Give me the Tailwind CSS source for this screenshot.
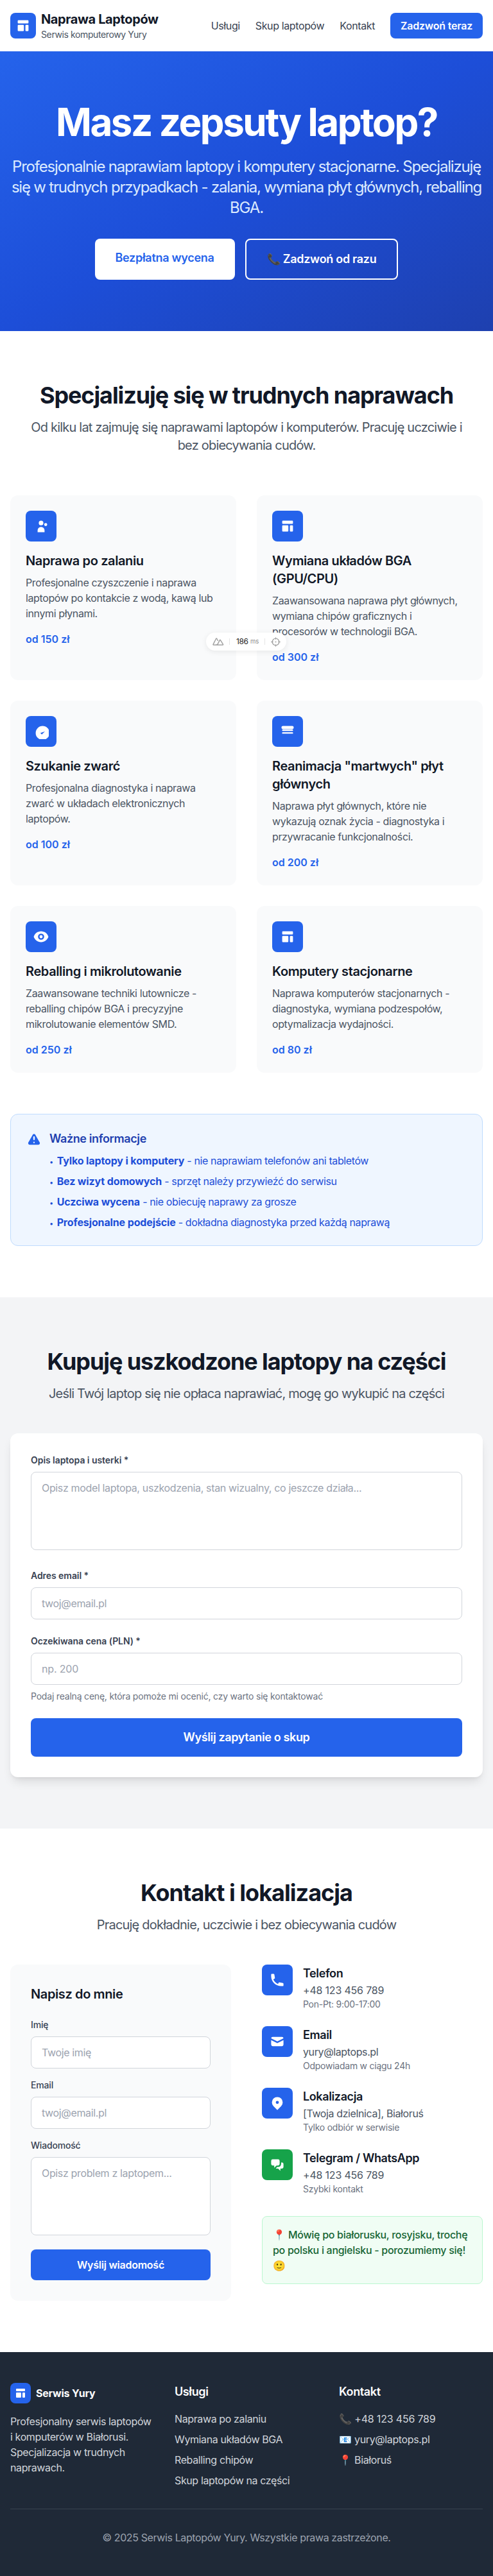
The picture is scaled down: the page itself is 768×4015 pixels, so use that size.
<!DOCTYPE html>
<html lang="pl">
<head>
<meta charset="utf-8">
<meta name="viewport" content="width=device-width, initial-scale=1">
<title>Naprawa Laptopów</title>
<script src="https://cdn.jsdelivr.net/npm/@tailwindcss/browser@4"></script>
</head>
<body class="relative bg-white font-['Inter',sans-serif] text-base tracking-[-0.024em] text-[#111827] antialiased">

<svg class="hidden" aria-hidden="true">
  <symbol id="layout" viewBox="0 0 20 20"><path d="M3 4a1 1 0 011-1h12a1 1 0 011 1v2a1 1 0 01-1 1H4a1 1 0 01-1-1V4zM3 10a1 1 0 011-1h6a1 1 0 011 1v6a1 1 0 01-1 1H4a1 1 0 01-1-1v-6zM14 9a1 1 0 00-1 1v6a1 1 0 001 1h2a1 1 0 001-1v-6a1 1 0 00-1-1h-2z"/></symbol>
</svg>

<header class="h-20 bg-white px-4 flex items-center justify-between">
  <div class="flex items-center gap-2">
    <div class="size-10 rounded-lg bg-[#2563eb] flex items-center justify-center text-white"><svg class="size-6" fill="currentColor"><use href="#layout"/></svg></div>
    <div>
      <h1 class="text-xl leading-7 font-bold">Naprawa Laptopów</h1>
      <p class="text-sm leading-5 text-[#4b5563]">Serwis komputerowy Yury</p>
    </div>
  </div>
  <nav class="flex items-center gap-6 whitespace-nowrap text-[#374151]">
    <a>Usługi</a>
    <a>Skup laptopów</a>
    <a>Kontakt</a>
    <a class="rounded-lg bg-[#2563eb] px-4 py-2 font-semibold tracking-[-0.0135em] text-white">Zadzwoń teraz</a>
  </nav>
</header>

<section class="bg-[linear-gradient(to_bottom_right,#2563eb,#1d4ed8,#1e40af)] py-20 px-4 text-center text-white">
  <h2 class="mb-6 text-6xl leading-[60px] font-bold tracking-[-0.0406em]">Masz zepsuty laptop?</h2>
  <p class="mb-8 text-2xl leading-8 tracking-[-0.0496em] text-[#dbeafe] whitespace-nowrap">Profesjonalnie naprawiam laptopy i komputery stacjonarne. Specjalizuję<br>się w trudnych przypadkach - zalania, wymiana płyt głównych, reballing<br>BGA.</p>
  <div class="flex justify-center gap-4 text-lg leading-7 font-semibold tracking-[-0.0164em]">
    <a class="rounded-lg bg-white px-8 py-4 text-[#2563eb]">Bezpłatna wycena</a>
    <a class="rounded-lg border-2 border-white px-8 py-4 text-white"><span class="inline-block w-[21px] tracking-normal text-[17px] leading-none">📞</span> Zadzwoń od razu</a>
  </div>
</section>

<section class="py-20 px-4">
  <div class="mb-16 text-center whitespace-nowrap">
    <h2 class="mb-4 text-4xl leading-10 font-bold tracking-[-0.0306em]">Specjalizuję się w trudnych naprawach</h2>
    <p class="text-xl leading-7 tracking-[-0.0397em] text-[#4b5563]">Od kilku lat zajmuję się naprawami laptopów i komputerów. Pracuję uczciwie i<br>bez obiecywania cudów.</p>
  </div>
  <div class="grid grid-cols-2 gap-8">
    <article class="rounded-xl bg-[#f9fafb] p-6">
      <div class="mb-4 size-12 rounded-lg bg-[#2563eb] flex items-center justify-center text-white"><svg class="size-6" viewBox="0 0 20 20" fill="currentColor"><path d="M13 6a3 3 0 11-6 0 3 3 0 016 0zM18 8a2 2 0 11-4 0 2 2 0 014 0zM14.5 15.5a4.5 4.5 0 00-9 0V18h9v-2.500z"/></svg></div>
      <h3 class="mb-2 text-xl leading-7 font-semibold">Naprawa po zalaniu</h3>
      <p class="mb-4 text-[#4b5563]">Profesjonalne czyszczenie i naprawa<br>laptopów po kontakcie z wodą, kawą lub<br>innymi płynami.</p>
      <div class="font-semibold tracking-normal text-[#2563eb]">od 150 zł</div>
    </article>
    <article class="rounded-xl bg-[#f9fafb] p-6">
      <div class="mb-4 size-12 rounded-lg bg-[#2563eb] flex items-center justify-center text-white"><svg class="size-6" fill="currentColor"><use href="#layout"/></svg></div>
      <h3 class="mb-2 text-xl leading-7 font-semibold">Wymiana układów BGA<br>(GPU/CPU)</h3>
      <p class="mb-4 text-[#4b5563]">Zaawansowana naprawa płyt głównych,<br>wymiana chipów graficznych i<br>procesorów w technologii BGA.</p>
      <div class="font-semibold tracking-normal text-[#2563eb]">od 300 zł</div>
    </article>
    <article class="rounded-xl bg-[#f9fafb] p-6">
      <div class="mb-4 size-12 rounded-lg bg-[#2563eb] flex items-center justify-center text-white"><svg class="size-6" viewBox="0 0 20 20" fill="currentColor" fill-rule="evenodd"><path d="M9 12l2 2 4-4zm12 0a9 9 0 11-18 0 9 9 0 0118 0z"/></svg></div>
      <h3 class="mb-2 text-xl leading-7 font-semibold">Szukanie zwarć</h3>
      <p class="mb-4 text-[#4b5563]">Profesjonalna diagnostyka i naprawa<br>zwarć w układach elektronicznych<br>laptopów.</p>
      <div class="font-semibold tracking-normal text-[#2563eb]">od 100 zł</div>
    </article>
    <article class="rounded-xl bg-[#f9fafb] p-6">
      <div class="mb-4 size-12 rounded-lg bg-[#2563eb] flex items-center justify-center text-white"><svg class="size-6" viewBox="0 0 20 20" fill="currentColor"><path d="M4 3a2 2 0 100 4h12a2 2 0 100-4H4z"/><rect x="2.900" y="7.400" width="14.200" height="1.900" rx=".8"/><rect x="2.900" y="11" width="14.200" height="2" rx=".8"/></svg></div>
      <h3 class="mb-2 text-xl leading-7 font-semibold">Reanimacja "martwych" płyt<br>głównych</h3>
      <p class="mb-4 text-[#4b5563]">Naprawa płyt głównych, które nie<br>wykazują oznak życia - diagnostyka i<br>przywracanie funkcjonalności.</p>
      <div class="font-semibold tracking-normal text-[#2563eb]">od 200 zł</div>
    </article>
    <article class="rounded-xl bg-[#f9fafb] p-6">
      <div class="mb-4 size-12 rounded-lg bg-[#2563eb] flex items-center justify-center text-white"><svg class="size-6" viewBox="0 0 20 20" fill="currentColor" fill-rule="evenodd"><path d="M10 12a2 2 0 100-4 2 2 0 000 4z"/><path d="M.458 10C1.732 5.943 5.522 3 10 3s8.268 2.943 9.542 7c-1.274 4.057-5.064 7-9.542 7S1.732 14.057.458 10zM14 10a4 4 0 11-8 0 4 4 0 018 0z"/></svg></div>
      <h3 class="mb-2 text-xl leading-7 font-semibold">Reballing i mikrolutowanie</h3>
      <p class="mb-4 text-[#4b5563]">Zaawansowane techniki lutownicze -<br>reballing chipów BGA i precyzyjne<br>mikrolutowanie elementów SMD.</p>
      <div class="font-semibold tracking-normal text-[#2563eb]">od 250 zł</div>
    </article>
    <article class="rounded-xl bg-[#f9fafb] p-6">
      <div class="mb-4 size-12 rounded-lg bg-[#2563eb] flex items-center justify-center text-white"><svg class="size-6" fill="currentColor"><use href="#layout"/></svg></div>
      <h3 class="mb-2 text-xl leading-7 font-semibold">Komputery stacjonarne</h3>
      <p class="mb-4 text-[#4b5563]">Naprawa komputerów stacjonarnych -<br>diagnostyka, wymiana podzespołów,<br>optymalizacja wydajności.</p>
      <div class="font-semibold tracking-normal text-[#2563eb]">od 80 zł</div>
    </article>
  </div>

  <div class="mt-16 flex items-start gap-3 rounded-xl border border-[#bfdbfe] bg-[#eff6ff] p-6">
    <svg class="mt-1 size-6 shrink-0 text-[#2563eb]" viewBox="0 0 20 20" fill="currentColor" fill-rule="evenodd"><path d="M8.257 3.099c.765-1.360 2.722-1.360 3.486 0l5.580 9.920c.750 1.334-.213 2.980-1.742 2.980H4.420c-1.530 0-2.493-1.646-1.743-2.980l5.580-9.920zM11 13a1 1 0 11-2 0 1 1 0 012 0zm-1-8a1 1 0 00-1 1v3a1 1 0 002 0V6a1 1 0 00-1-1z"/></svg>
    <div>
      <h4 class="mb-2 text-lg leading-7 font-semibold text-[#1e40af]">Ważne informacje</h4>
      <ul class="space-y-2 text-[#1d4ed8]">
        <li class="h-6"><span class="inline-block w-[7.500px] text-[11px] leading-none">•</span> <strong class="font-bold tracking-[-0.008em]">Tylko laptopy i komputery</strong> - nie naprawiam telefonów ani tabletów</li>
        <li class="h-6"><span class="inline-block w-[7.500px] text-[11px] leading-none">•</span> <strong class="font-bold tracking-[-0.008em]">Bez wizyt domowych</strong> - sprzęt należy przywieźć do serwisu</li>
        <li class="h-6"><span class="inline-block w-[7.500px] text-[11px] leading-none">•</span> <strong class="font-bold tracking-[-0.008em]">Uczciwa wycena</strong> - nie obiecuję naprawy za grosze</li>
        <li class="h-6"><span class="inline-block w-[7.500px] text-[11px] leading-none">•</span> <strong class="font-bold tracking-[-0.008em]">Profesjonalne podejście</strong> - dokładna diagnostyka przed każdą naprawą</li>
      </ul>
    </div>
  </div>
</section>

<section class="bg-[#f3f4f6] py-20 px-4">
  <div class="mb-12 text-center">
    <h2 class="mb-4 text-4xl leading-10 font-bold tracking-[-0.0306em]">Kupuję uszkodzone laptopy na części</h2>
    <p class="text-xl leading-7 tracking-[-0.0397em] text-[#4b5563]">Jeśli Twój laptop się nie opłaca naprawiać, mogę go wykupić na części</p>
  </div>
  <form class="rounded-xl bg-white p-8 shadow-lg">
    <label class="mb-2 block text-sm leading-5 font-semibold tracking-[-0.004em] text-[#374151]">Opis laptopa i usterki *</label>
    <textarea rows="4" class="block h-[122px] w-full resize-none rounded-lg border border-[#d1d5db] bg-white px-4 py-3 leading-6 tracking-[-0.022em] placeholder:text-[#9ca3af]" placeholder="Opisz model laptopa, uszkodzenia, stan wizualny, co jeszcze działa..."></textarea>
    <label class="mt-[30px] mb-2 block text-sm leading-5 font-semibold tracking-[-0.004em] text-[#374151]">Adres email *</label>
    <input type="email" class="block h-[50px] w-full rounded-lg border border-[#d1d5db] bg-white px-4 py-3 tracking-[-0.022em] placeholder:text-[#9ca3af]" placeholder="twoj@email.pl">
    <label class="mt-6 mb-2 block text-sm leading-5 font-semibold tracking-[-0.004em] text-[#374151]">Oczekiwana cena (PLN) *</label>
    <input type="text" class="block h-[50px] w-full rounded-lg border border-[#d1d5db] bg-white px-4 py-3 tracking-[-0.01em] placeholder:text-[#9ca3af]" placeholder="np. 200">
    <p class="mt-2 mb-6 text-sm leading-5 tracking-[-0.0143em] text-[#6b7280]">Podaj realną cenę, która pomoże mi ocenić, czy warto się kontaktować</p>
    <button type="button" class="block h-15 w-full rounded-lg bg-[#2563eb] text-lg leading-7 font-semibold tracking-[-0.0203em] text-white">Wyślij zapytanie o skup</button>
  </form>
</section>

<section class="py-20 px-4">
  <div class="mb-12 text-center">
    <h2 class="mb-4 text-4xl leading-10 font-bold tracking-[-0.0272em]">Kontakt i lokalizacja</h2>
    <p class="text-xl leading-7 tracking-[-0.0397em] text-[#4b5563]">Pracuję dokładnie, uczciwie i bez obiecywania cudów</p>
  </div>
  <div class="grid grid-cols-2 gap-12">
    <form class="rounded-xl bg-[#f9fafb] p-8">
      <h3 class="mb-6 text-xl leading-7 font-semibold">Napisz do mnie</h3>
      <label class="mb-2 block text-sm leading-5 font-medium tracking-[-0.013em] text-[#374151]">Imię</label>
      <input type="text" class="mb-4 block h-[50px] w-full rounded-lg border border-[#d1d5db] bg-white px-4 py-3 tracking-[-0.022em] placeholder:text-[#9ca3af]" placeholder="Twoje imię">
      <label class="mb-2 block text-sm leading-5 font-medium tracking-[-0.013em] text-[#374151]">Email</label>
      <input type="email" class="mb-4 block h-[50px] w-full rounded-lg border border-[#d1d5db] bg-white px-4 py-3 tracking-[-0.022em] placeholder:text-[#9ca3af]" placeholder="twoj@email.pl">
      <label class="mb-2 block text-sm leading-5 font-medium tracking-[-0.013em] text-[#374151]">Wiadomość</label>
      <textarea rows="4" class="mb-[22px] block h-[122px] w-full resize-none rounded-lg border border-[#d1d5db] bg-white px-4 py-3 leading-6 tracking-[-0.022em] placeholder:text-[#9ca3af]" placeholder="Opisz problem z laptopem..."></textarea>
      <button type="button" class="block h-12 w-full rounded-lg bg-[#2563eb] font-semibold tracking-[-0.0153em] text-white">Wyślij wiadomość</button>
    </form>
    <div>
      <div class="space-y-6">
        <div class="flex items-start gap-4">
          <div class="size-12 rounded-lg bg-[#2563eb] flex items-center justify-center text-white"><svg class="size-6" viewBox="0 0 20 20" fill="currentColor"><path d="M2 3a1 1 0 011-1h2.153a1 1 0 01.986.836l.740 4.435a1 1 0 01-.540 1.060l-1.548.773a11.037 11.037 0 006.105 6.105l.774-1.548a1 1 0 011.059-.540l4.435.740a1 1 0 01.836.986V17a1 1 0 01-1 1h-2C7.820 18 2 12.180 2 5V3z"/></svg></div>
          <div>
            <h4 class="text-lg leading-7 font-semibold">Telefon</h4>
            <p class="tracking-[-0.012em] text-[#4b5563]">+48 123 456 789</p>
            <p class="text-sm leading-5 tracking-[-0.0177em] text-[#6b7280]">Pon-Pt: 9:00-17:00</p>
          </div>
        </div>
        <div class="flex items-start gap-4">
          <div class="size-12 rounded-lg bg-[#2563eb] flex items-center justify-center text-white"><svg class="size-6" viewBox="0 0 20 20" fill="currentColor"><path d="M2.003 5.884L10 9.882l7.997-3.998A2 2 0 0016 4H4a2 2 0 00-1.997 1.884z"/><path d="M18 8.118l-8 4-8-4V14a2 2 0 002 2h12a2 2 0 002-2V8.118z"/></svg></div>
          <div>
            <h4 class="text-lg leading-7 font-semibold">Email</h4>
            <p class="text-[#4b5563]">yury@laptops.pl</p>
            <p class="text-sm leading-5 tracking-[-0.0177em] text-[#6b7280]">Odpowiadam w ciągu 24h</p>
          </div>
        </div>
        <div class="flex items-start gap-4">
          <div class="size-12 rounded-lg bg-[#2563eb] flex items-center justify-center text-white"><svg class="size-6" viewBox="0 0 20 20" fill="currentColor" fill-rule="evenodd"><path d="M5.050 4.050a7 7 0 119.900 9.900L10 18.900l-4.950-4.950a7 7 0 010-9.900zM10 11a2 2 0 100-4 2 2 0 000 4z"/></svg></div>
          <div>
            <h4 class="text-lg leading-7 font-semibold">Lokalizacja</h4>
            <p class="text-[#4b5563]">[Twoja dzielnica], Białoruś</p>
            <p class="text-sm leading-5 tracking-[-0.0177em] text-[#6b7280]">Tylko odbiór w serwisie</p>
          </div>
        </div>
        <div class="flex items-start gap-4">
          <div class="size-12 rounded-lg bg-[#16a34a] flex items-center justify-center text-white"><svg class="size-6" viewBox="0 0 20 20" fill="currentColor"><path d="M2 5a2 2 0 012-2h7a2 2 0 012 2v4a2 2 0 01-2 2H9l-3 3v-3H4a2 2 0 01-2-2V5z"/><path d="M15 7v2a4 4 0 01-4 4H9.828l-1.766 1.767c.280.149.599.233.938.233h2l3 3v-3h2a2 2 0 002-2V9a2 2 0 00-2-2h-1z"/></svg></div>
          <div>
            <h4 class="text-lg leading-7 font-semibold">Telegram / WhatsApp</h4>
            <p class="tracking-[-0.012em] text-[#4b5563]">+48 123 456 789</p>
            <p class="text-sm leading-5 tracking-[-0.0177em] text-[#6b7280]">Szybki kontakt</p>
          </div>
        </div>
      </div>
      <p class="mt-8 rounded-lg border border-[#bbf7d0] bg-[#f0fdf4] p-4 font-medium leading-6 tracking-[-0.0184em] whitespace-nowrap text-[#166534]"><span class="inline-block w-5 tracking-normal leading-none">📍</span> Mówię po białorusku, rosyjsku, trochę<br>po polsku i angielsku - porozumiemy się!<br><span class="inline-block w-5 tracking-normal leading-none">🙂</span></p>
    </div>
  </div>
</section>

<footer class="bg-[#1f2937] px-4 py-12 text-white">
  <div class="grid grid-cols-3 gap-8 whitespace-nowrap">
    <div>
      <div class="mb-4 flex items-center gap-2">
        <div class="size-8 rounded-lg bg-[#2563eb] flex items-center justify-center"><svg class="size-5" fill="currentColor"><use href="#layout"/></svg></div>
        <span class="font-bold tracking-[-0.0129em]">Serwis Yury</span>
      </div>
      <p class="text-[#d1d5db]">Profesjonalny serwis laptopów<br>i komputerów w Białorusi.<br>Specjalizacja w trudnych<br>naprawach.</p>
    </div>
    <div>
      <h4 class="mb-4 text-lg leading-7 font-semibold">Usługi</h4>
      <ul class="space-y-2 text-[#d1d5db]">
        <li>Naprawa po zalaniu</li>
        <li>Wymiana układów BGA</li>
        <li>Reballing chipów</li>
        <li>Skup laptopów na części</li>
      </ul>
    </div>
    <div>
      <h4 class="mb-4 text-lg leading-7 font-semibold">Kontakt</h4>
      <ul class="space-y-2 text-[#d1d5db]">
        <li class="h-6 tracking-[-0.012em]"><span class="inline-block w-5 tracking-normal leading-none">📞</span> +48 123 456 789</li>
        <li class="h-6"><span class="inline-block w-5 tracking-normal leading-none">📧</span> yury@laptops.pl</li>
        <li class="h-6"><span class="inline-block w-5 tracking-normal leading-none">📍</span> Białoruś</li>
      </ul>
    </div>
  </div>
  <div class="mt-8 border-t border-[#374151] pt-8 text-center text-[#9ca3af]">© 2025 Serwis Laptopów Yury. Wszystkie prawa zastrzeżone.</div>
</footer>

<!-- Floating devtools pill over the service cards -->
<div class="absolute top-[986px] left-[321px] flex h-7 w-[125px] items-center rounded-full bg-white pl-[10px] shadow-[0_2px_8px_rgba(0,0,0,0.08)]">
  <svg class="h-3 w-[18px]" viewBox="0 0 18 12" fill="none" stroke="#a3a3a3" stroke-width="1.500" stroke-linejoin="round"><path d="M8.500 11.200H1.700Q.7 11.200 1.200 10.200L5.600 1.500Q6.200.6 6.800 1.500L8.600 5"/><path d="M5.500 11.200Q7.500 11.200 8 10.200L11.300 3.800Q11.900 2.900 12.500 3.800L16.400 10.200Q16.900 11.200 15.900 11.200Z"/></svg>
  <span class="ml-2 h-2.5 w-px bg-[#e5e5e5]"></span>
  <span class="ml-[10px] w-[20px] text-[12px] leading-4 tracking-[-0.03em] text-[#262626]">186</span>
  <span class="ml-[2px] w-[13px] text-[9.500px] leading-4 tracking-[-0.02em] text-[#8a8a8a]">ms</span>
  <span class="ml-[9px] h-2.5 w-px bg-[#e5e5e5]"></span>
  <svg class="ml-[9px] size-[15px]" viewBox="0 0 15 15" fill="none" stroke="#a3a3a3" stroke-width="1.300" stroke-linecap="round"><circle cx="7.500" cy="7.500" r="5.300"/><path d="M7.500.8v2.400M7.500 11.800v2.400M.8 7.500h2.400M11.800 7.500h2.400"/><circle cx="7.500" cy="7.500" r=".4"/></svg>
</div>
</body>
</html>
